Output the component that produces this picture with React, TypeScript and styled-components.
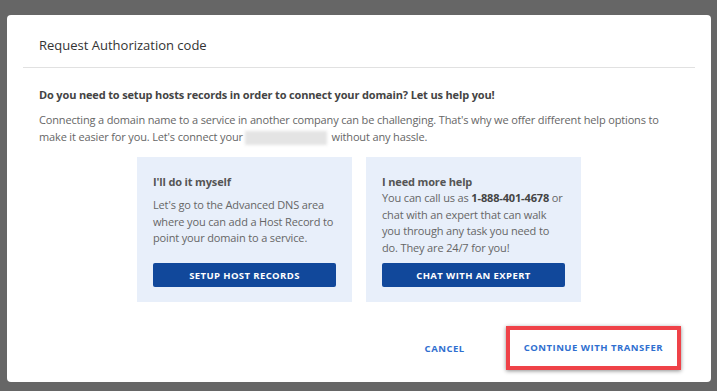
import styled, { createGlobalStyle } from "styled-components";

const GlobalStyle = createGlobalStyle`
  html, body {
    margin: 0;
    padding: 0;
    background: #666666;
  }
  * {
    box-sizing: border-box;
  }
`;

const Backdrop = styled.div`
  width: 717px;
  height: 391px;
  padding: 15px 6px 9px 7px;
  background: #666666;
  font-family: "Open Sans", "Noto Sans", sans-serif;
`;

const Modal = styled.div`
  height: 100%;
  background: #fff;
  border-radius: 4px;
  display: flex;
  flex-direction: column;
`;

const Header = styled.div`
  margin: 0 16px;
  padding: 21px 16px 13px;
  border-bottom: 1px solid #e1e1e1;
`;

const Title = styled.h2`
  margin: 0;
  font-size: 13px;
  line-height: 18px;
  font-weight: 400;
  color: #333;
`;

const Body = styled.div`
  padding: 18px 32px 0;
  display: flex;
  flex-direction: column;
`;

const Lead = styled.p`
  margin: 0;
  font-size: 11px;
  line-height: 17px;
  font-weight: 700;
  color: #444;
  letter-spacing: -0.15px;
`;

const Text = styled.p`
  margin: 8px 0 0;
  font-size: 11px;
  line-height: 17px;
  color: #666;
  letter-spacing: -0.15px;
`;

const Blurred = styled.span`
  display: inline-block;
  vertical-align: middle;
  width: 82px;
  height: 14px;
  margin: 0 2px;
  background: #e4e4e4;
  filter: blur(1.5px);
`;

const Cards = styled.div`
  margin-top: 12px;
  display: flex;
  justify-content: center;
  gap: 14px;
`;

const Card = styled.div`
  width: 215px;
  padding: 16px 16px 15px;
  background: #e8effa;
  display: flex;
  flex-direction: column;
`;

const CardTitle = styled.h3<{ $spaced?: boolean }>`
  margin: 0 0 ${({ $spaced }) => ($spaced ? "7px" : "0")};
  font-size: 11px;
  line-height: 17px;
  font-weight: 700;
  color: #555;
  letter-spacing: -0.15px;
`;

const CardText = styled.p`
  margin: 0;
  font-size: 11px;
  line-height: 16.5px;
  color: #666;
  letter-spacing: -0.15px;

  strong {
    color: #444;
  }
`;

const CardButtonWrap = styled.div`
  margin-top: auto;
  padding-top: 7px;
`;

const CardButton = styled.button`
  display: block;
  height: 24px;
  width: 100%;
  border: none;
  border-radius: 2px;
  background: #11489b;
  color: #fff;
  font-family: inherit;
  font-size: 9.5px;
  font-weight: 700;
  letter-spacing: 0.4px;
  cursor: pointer;
`;

const Footer = styled.div`
  margin: 24px -2px 0 0;
  display: flex;
  justify-content: flex-end;
  align-items: center;
`;

const TextButton = styled.button`
  border: none;
  background: transparent;
  padding: 8px 12px;
  font-family: inherit;
  font-size: 9.5px;
  font-weight: 700;
  letter-spacing: 0.5px;
  color: #2f6fd0;
  cursor: pointer;
`;

const Highlight = styled.div`
  margin-left: 29px;
  border: 4px solid #ef4248;
  box-shadow: 0 1px 4px rgba(0, 0, 0, 0.45);
  padding: 3px 2px 4px;
`;

export default function App() {
  return (
    <>
      <GlobalStyle />
      <Backdrop>
        <Modal>
          <Header>
            <Title>Request Authorization code</Title>
          </Header>
          <Body>
            <Lead>
              Do you need to setup hosts records in order to connect your domain? Let us help you!
            </Lead>
            <Text>
              Connecting a domain name to a service in another company can be challenging. That's why
              we offer different help options to make it easier for you. Let's connect your
              <Blurred /> without any hassle.
            </Text>
            <Cards>
              <Card>
                <CardTitle $spaced>I'll do it myself</CardTitle>
                <CardText>
                  Let's go to the Advanced DNS area where you can add a Host Record to point your
                  domain to a service.
                </CardText>
                <CardButtonWrap>
                  <CardButton>SETUP HOST RECORDS</CardButton>
                </CardButtonWrap>
              </Card>
              <Card>
                <CardTitle>I need more help</CardTitle>
                <CardText>
                  You can call us as <strong>1-888-401-4678</strong> or chat with an expert that can
                  walk you through any task you need to do. They are 24/7 for you!
                </CardText>
                <CardButtonWrap>
                  <CardButton>CHAT WITH AN EXPERT</CardButton>
                </CardButtonWrap>
              </Card>
            </Cards>
            <Footer>
              <TextButton>CANCEL</TextButton>
              <Highlight>
                <TextButton>CONTINUE WITH TRANSFER</TextButton>
              </Highlight>
            </Footer>
          </Body>
        </Modal>
      </Backdrop>
    </>
  );
}
